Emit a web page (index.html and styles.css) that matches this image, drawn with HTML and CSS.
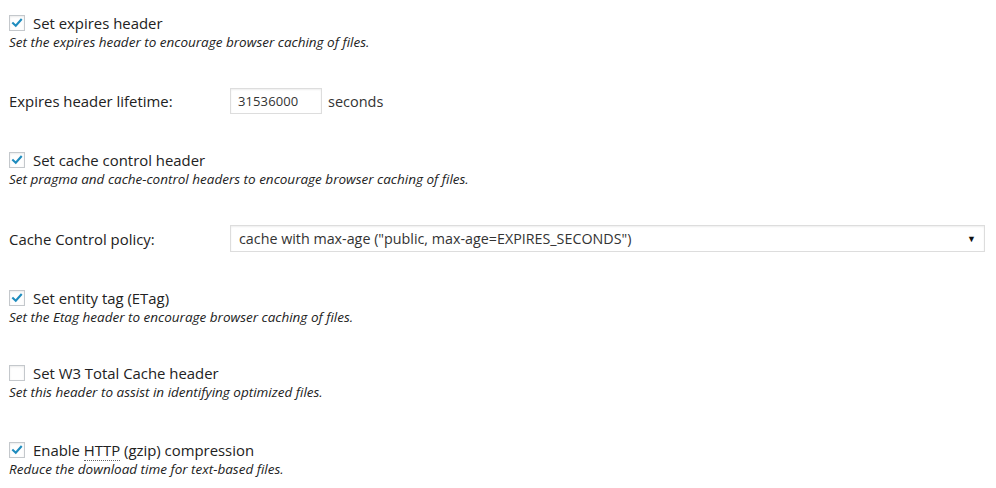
FILE: index.html
```html
<!DOCTYPE html>
<html>
<head>
<meta charset="utf-8">
<link rel="stylesheet" href="styles.css">
</head>
<body>
<div class="page">
  <div class="row check-row">
    <label class="check-label"><span class="cb checked"><svg viewBox="0 0 16 16"><path d="M3.5 8.2 L6.6 11.2 L12.6 4.4" /></svg></span><span>Set expires header</span></label>
    <div class="desc">Set the expires header to encourage browser caching of files.</div>
  </div>
  <div class="row field-row">
    <div class="field-label">Expires header lifetime:</div>
    <div class="field">
      <div class="input">31536000</div>
      <span class="unit">seconds</span>
    </div>
  </div>
  <div class="row check-row">
    <label class="check-label"><span class="cb checked"><svg viewBox="0 0 16 16"><path d="M3.5 8.2 L6.6 11.2 L12.6 4.4" /></svg></span><span>Set cache control header</span></label>
    <div class="desc">Set pragma and cache-control headers to encourage browser caching of files.</div>
  </div>
  <div class="row field-row">
    <div class="field-label">Cache Control policy:</div>
    <div class="field grow">
      <div class="select"><span>cache with max-age ("public, max-age=EXPIRES_SECONDS")</span><span class="arrow">▼</span></div>
    </div>
  </div>
  <div class="row check-row">
    <label class="check-label"><span class="cb checked"><svg viewBox="0 0 16 16"><path d="M3.5 8.2 L6.6 11.2 L12.6 4.4" /></svg></span><span>Set entity tag (ETag)</span></label>
    <div class="desc">Set the Etag header to encourage browser caching of files.</div>
  </div>
  <div class="row check-row">
    <label class="check-label"><span class="cb"></span><span>Set W3 Total Cache header</span></label>
    <div class="desc">Set this header to assist in identifying optimized files.</div>
  </div>
  <div class="row check-row last">
    <label class="check-label"><span class="cb checked"><svg viewBox="0 0 16 16"><path d="M3.5 8.2 L6.6 11.2 L12.6 4.4" /></svg></span><span>Enable <abbr class="abbr">HTTP</abbr> (gzip) compression</span></label>
    <div class="desc">Reduce the download time for text-based files.</div>
  </div>
</div>
</body>
</html>
```
FILE: styles.css
```css
html, body {
  margin: 0;
  padding: 0;
  background: #fff;
}
body {
  font-family: "Open Sans", "Liberation Sans", sans-serif;
  font-size: 13px;
  color: #222;
  overflow: hidden;
}
.page {
  padding: 13px 11px 0 9px;
  display: flex;
  flex-direction: column;
}
.check-row {
  display: flex;
  flex-direction: column;
  margin-bottom: 37px;
}
.check-row.last {
  margin-top: 2px;
}
.check-label {
  display: flex;
  align-items: center;
  height: 20px;
  font-size: 14.9px;
  color: #222;
  white-space: nowrap;
}
.cb {
  width: 16px;
  height: 16px;
  flex: none;
  box-sizing: border-box;
  border: 1px solid #c4c8cc;
  background: #fefefe;
  box-shadow: inset 0 1px 2px rgba(0,0,0,0.08);
  margin-right: 8px;
  display: flex;
  align-items: center;
  justify-content: center;
}
.cb svg {
  width: 14px;
  height: 14px;
}
.cb svg path {
  fill: none;
  stroke: #1e8cbe;
  stroke-width: 2.4;
  stroke-linecap: square;
}
.desc {
  font-style: italic;
  font-size: 13.5px;
  line-height: 18px;
  color: #222;
  white-space: nowrap;
}
.field-row {
  display: flex;
  align-items: center;
  margin-bottom: 36px;
}
.field-label {
  width: 221px;
  flex: none;
  font-size: 14.9px;
}
.field {
  display: flex;
  align-items: center;
}
.field.grow {
  flex: 1;
}
.input {
  width: 92px;
  height: 26px;
  box-sizing: border-box;
  border: 1px solid #ddd;
  box-shadow: inset 0 1px 2px rgba(0,0,0,0.07);
  padding: 0 7px;
  display: flex;
  align-items: center;
  font-size: 13px;
  letter-spacing: 0.1px;
  color: #333;
}
.unit {
  margin-left: 6px;
  font-size: 14.5px;
  color: #333;
}
.select {
  flex: 1;
  height: 27px;
  box-sizing: border-box;
  border: 1px solid #ddd;
  box-shadow: inset 0 1px 2px rgba(0,0,0,0.07);
  padding: 0 8px 0 8px;
  display: flex;
  align-items: center;
  justify-content: space-between;
  font-size: 14.3px;
  color: #333;
}
.arrow {
  font-size: 9px;
  color: #111;
}
.abbr {
  text-decoration: none;
  border-bottom: 1px dotted #666;
}
```
